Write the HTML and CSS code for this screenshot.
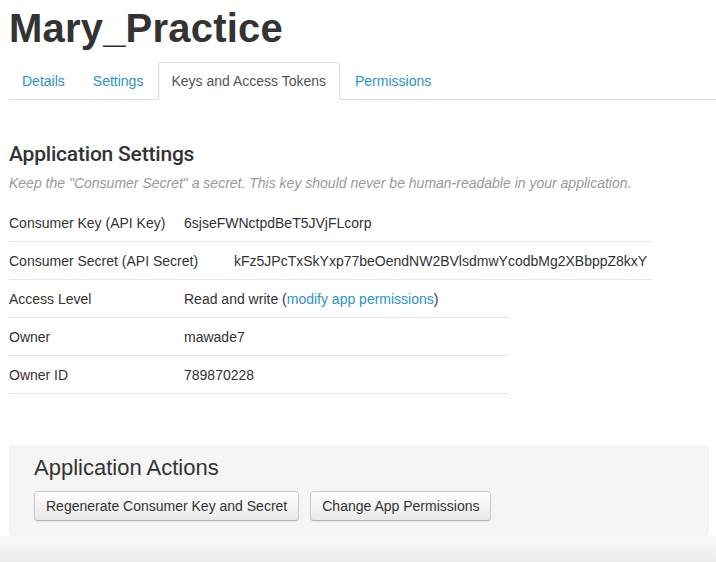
FILE: index.html
```html
<!DOCTYPE html>
<html>
<head>
<meta charset="utf-8">
<link rel="stylesheet" href="styles.css">
</head>
<body>
<div class="page">
  <h1 class="app-title">Mary_Practice</h1>
  <ul class="tabs">
    <li class="tab"><a href="#">Details</a></li>
    <li class="tab"><a href="#">Settings</a></li>
    <li class="tab active"><a href="#">Keys and Access Tokens</a></li>
    <li class="tab"><a href="#">Permissions</a></li>
  </ul>

  <h2 class="section-title">Application Settings</h2>
  <p class="help">Keep the "Consumer Secret" a secret. This key should never be human-readable in your application.</p>

  <div class="group group-wide">
    <div class="row"><span class="label">Consumer Key (API Key)</span><span class="value">6sjseFWNctpdBeT5JVjFLcorp</span></div>
    <div class="row"><span class="label label-wide">Consumer Secret (API Secret)</span><span class="value">kFz5JPcTxSkYxp77beOendNW2BVlsdmwYcodbMg2XBbppZ8kxY</span></div>
  </div>
  <div class="group group-narrow">
    <div class="row"><span class="label">Access Level</span><span class="value">Read and write (<a href="#">modify app permissions</a>)</span></div>
    <div class="row"><span class="label">Owner</span><span class="value">mawade7</span></div>
    <div class="row"><span class="label">Owner ID</span><span class="value">789870228</span></div>
  </div>

  <div class="actions">
    <h3 class="actions-title">Application Actions</h3>
    <div class="buttons">
      <button class="btn">Regenerate Consumer Key and Secret</button>
      <button class="btn">Change App Permissions</button>
    </div>
  </div>
</div>
<div class="footer"></div>
</body>
</html>
```

FILE: styles.css
```css
html, body {
  margin: 0;
  padding: 0;
  background: #fff;
  overflow: hidden;
}
body {
  font-family: "Liberation Sans", Arial, sans-serif;
  color: #333;
  font-size: 14px;
}
a {
  color: #2a93c9;
  text-decoration: none;
}
.page {
  padding-left: 9px;
}
.app-title {
  margin: 0;
  padding-top: 4px;
  font-size: 40px;
  line-height: 48px;
  font-weight: bold;
  color: #333;
  letter-spacing: 0.2px;
}
.tabs {
  list-style: none;
  margin: 10px 0 0 0;
  padding: 0;
  display: flex;
  border-bottom: 1px solid #ddd;
}
.tab {
  margin-right: 2px;
  margin-bottom: -1px;
}
.tab a {
  display: block;
  height: 36px;
  line-height: 36px;
  padding: 0 12px;
  border: 1px solid transparent;
  border-radius: 4px 4px 0 0;
  font-size: 14px;
}
.tab.active a {
  color: #555;
  border-color: #ddd;
  border-bottom-color: #fff;
  background: #fff;
  padding: 0 13px 0 12px;
}
.section-title {
  margin: 40px 0 0 0;
  font-family: Roboto, "Liberation Sans", sans-serif;
  font-weight: 500;
  font-size: 21px;
  line-height: 28px;
  letter-spacing: -0.2px;
  color: #333;
}
.help {
  margin: 6px 0 0 0;
  font-size: 14px;
  line-height: 18px;
  font-style: italic;
  color: #999;
  height: 30px;
}
.group {
  display: flex;
  flex-direction: column;
}
.group-wide {
  width: 643px;
}
.group-narrow {
  width: 500px;
}
.row {
  display: flex;
  align-items: center;
  height: 37px;
  border-bottom: 1px solid #e6e6e6;
  white-space: nowrap;
}
.label {
  min-width: 175px;
  padding-right: 12px;
  box-sizing: border-box;
}
.label-wide {
  min-width: 225px;
}
.actions {
  margin: 51px 7px 0 0;
  background: #f5f5f5;
  border-radius: 4px;
  padding: 11px 25px 15px 25px;
}
.actions-title {
  margin: 0;
  font-size: 22px;
  line-height: 24px;
  font-weight: normal;
  color: #333;
}
.buttons {
  display: flex;
  gap: 11px;
  margin-top: 11px;
}
.btn {
  height: 30px;
  padding: 0 11px;
  font-family: "Liberation Sans", Arial, sans-serif;
  font-size: 14px;
  color: #333;
  background: linear-gradient(#ffffff, #e8e8e8);
  border: 1px solid #c8c8c8;
  border-bottom-color: #b5b5b5;
  border-radius: 4px;
  box-shadow: 0 1px 1px rgba(0,0,0,0.06);
}
.footer {
  height: 26px;
  background: linear-gradient(#fbfbfb, #ebebeb);
}
```
